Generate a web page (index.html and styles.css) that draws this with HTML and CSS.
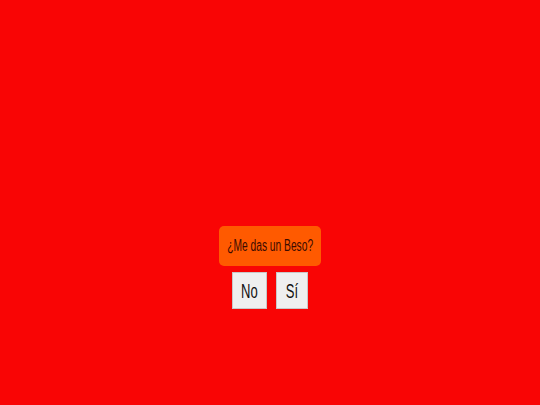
FILE: index.html
```html
<!DOCTYPE html>
<html lang="es">
<head>
<meta charset="utf-8">
<link rel="stylesheet" href="styles.css">
</head>
<body>
<main class="stage">
  <div class="question"><span class="narrow">¿Me das un Beso?</span></div>
  <div class="answers">
    <button class="btn btn-no"><span class="narrow">No</span></button>
    <button class="btn btn-si"><span class="narrow">Sí</span></button>
  </div>
</main>
</body>
</html>
```
FILE: styles.css
```css
html, body {
  margin: 0;
  padding: 0;
  width: 540px;
  height: 405px;
  background: #f90505;
  overflow: hidden;
}
.stage {
  display: flex;
  flex-direction: column;
  align-items: center;
  padding-top: 226px;
}
.question {
  width: 102px;
  height: 40px;
  box-sizing: border-box;
  background: #ff5a00;
  border-radius: 5px;
  display: flex;
  align-items: center;
  justify-content: center;
  font-family: "Liberation Sans", Arial, sans-serif;
  font-size: 16px;
  color: #3b0b00;
  white-space: nowrap;
}
.narrow {
  display: inline-block;
  transform: scaleX(0.64);
  transform-origin: center;
}
.answers {
  display: flex;
  gap: 9px;
  margin-top: 6px;
}
.btn {
  height: 37px;
  box-sizing: border-box;
  margin: 0;
  padding: 0;
  background: #efefef;
  border: 1px solid #c8c8c8;
  border-radius: 0;
  font-family: "Liberation Sans", Arial, sans-serif;
  font-size: 21px;
  color: #111;
  display: flex;
  align-items: center;
  justify-content: center;
  white-space: nowrap;
}
.btn .narrow { transform: scaleX(0.62); }
.btn-no { width: 35px; }
.btn-si { width: 32px; }
```
